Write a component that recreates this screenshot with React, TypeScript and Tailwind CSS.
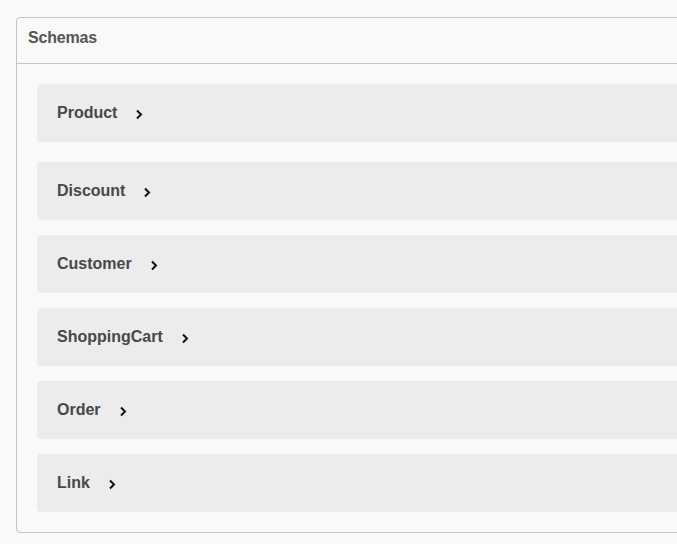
const schemas = ["Product", "Discount", "Customer", "ShoppingCart", "Order", "Link"];

const Chevron = () => (
  <svg width="8" height="11" viewBox="0 0 8 11" className="ml-[18px] mt-[2px] shrink-0">
    <path d="M2 1.5 L6 5.5 L2 9.5" fill="none" stroke="#111" strokeWidth="2" />
  </svg>
);

const App = () => {
  return (
    <div className="w-[677px] h-[544px] overflow-hidden bg-[#fafafa] pt-[17px] pl-[16px] font-['Liberation_Sans',Arial,sans-serif]">
      <div className="w-[720px] border border-[#c6c6c6] rounded-[4px] bg-[#f9f9f9]">
        <div className="h-[46px] px-[11px] pt-[8px] border-b border-[#c6c6c6]">
          <span className="text-[16px] font-bold text-[#555] tracking-[-0.2px]">Schemas</span>
        </div>
        <div className="px-[20px] pt-[20px] pb-[20px] flex flex-col">
          {schemas.map((name, i) => (
            <div
              key={name}
              className={`h-[58px] rounded-[4px] bg-[#ececec] flex items-center pl-[20px] ${
                i === 0 ? "mb-[20px]" : i < schemas.length - 1 ? "mb-[15px]" : ""
              }`}
            >
              <span className="text-[16px] font-bold text-[#484848]">{name}</span>
              <Chevron />
            </div>
          ))}
        </div>
      </div>
    </div>
  );
};

export default App;
